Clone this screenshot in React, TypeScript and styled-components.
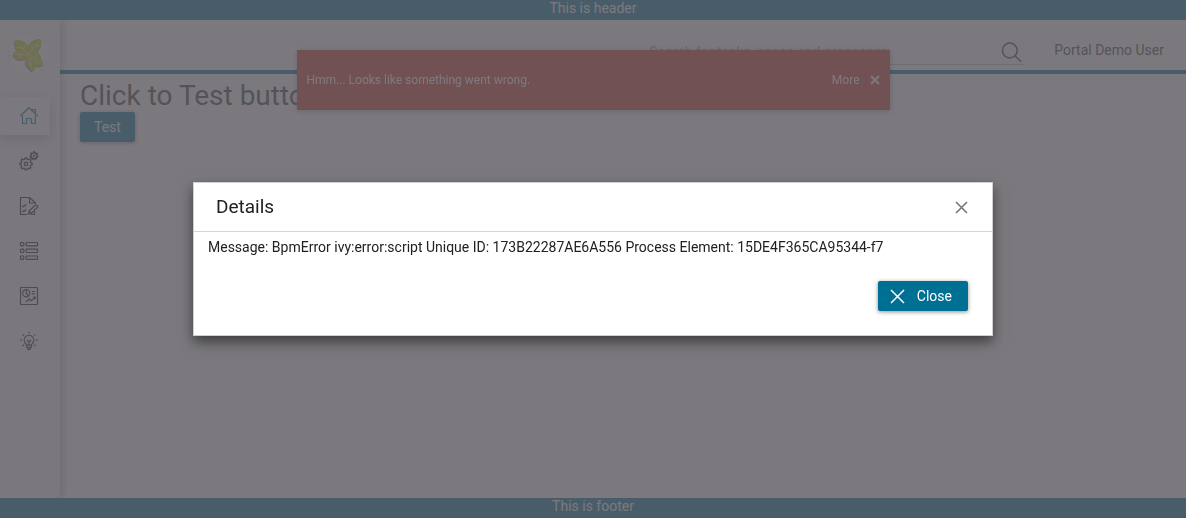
import React from "react";
import styled, { createGlobalStyle, css } from "styled-components";

const GlobalStyle = createGlobalStyle`
  *, *::before, *::after { box-sizing: border-box; }
  body {
    margin: 0;
    background: #fff;
    color: #424242;
    font-family: Roboto, "Liberation Sans", sans-serif;
    font-size: 14px;
    line-height: 16px;
  }
  button, input { font: inherit; }
`;

const Page = styled.div`
  display: flex;
  flex-direction: column;
  min-height: 100vh;
`;

const Banner = styled.div`
  height: 20px;
  background: #006f94;
  color: #fff;
  text-align: center;
`;

const Shell = styled.div`
  display: flex;
  flex: 1;
`;

const Sidebar = styled.aside`
  width: 60px;
  background: #fafafa;
  box-shadow: 2px 0 8px rgba(0, 0, 0, 0.3);
  clip-path: inset(0 -12px 0 0);
  z-index: 1;
`;

const LogoLink = styled.a`
  display: flex;
  justify-content: center;
  padding: 12px 2px 0 0;
  height: 74px;
`;

const Menu = styled.nav`
  display: flex;
  flex-direction: column;
  gap: 7px;
  padding-top: 3px;
`;

const MenuItem = styled.a<{ $active?: boolean }>`
  display: flex;
  align-items: center;
  width: 50px;
  height: 38px;
  padding-left: 19px;
  color: #212121;
  ${(p) =>
    p.$active &&
    css`
      background: #fff;
      color: #006f94;
      box-shadow: 0 4px 12px rgba(0, 0, 0, 0.25);
    `}
`;

const Main = styled.div`
  flex: 1;
  min-width: 0;
`;

const TopBar = styled.header`
  display: flex;
  justify-content: flex-end;
  height: 54px;
  padding-right: 22px;
  border-bottom: 4px solid #006f94;
`;

const SearchBox = styled.label`
  display: flex;
  align-items: center;
  width: 376px;
  height: 25px;
  margin: 20px 29px 0 0;
  padding-right: 2px;
  border-bottom: 1px solid #bdbdbd;
`;

const SearchInput = styled.input`
  flex: 1;
  height: 20px;
  padding: 0;
  border: 0;
  background: transparent;
  outline: none;
  &::placeholder { color: #9e9e9e; opacity: 1; }
`;

const UserLink = styled.a`
  margin-top: 22px;
  color: #424242;
  text-decoration: none;
`;

const Content = styled.main`
  padding: 6px 20px;
`;

const Title = styled.h1`
  margin: 0;
  font-size: 28px;
  font-weight: 400;
  line-height: 32px;
`;

const Button = styled.button<{ $icon?: boolean }>`
  display: flex;
  align-items: center;
  gap: 12px;
  height: 30px;
  padding: ${(p) => (p.$icon ? "0 16px 0 12px" : "0 14px")};
  border: 0;
  border-radius: 2px;
  background: #006f94;
  color: #fff;
  box-shadow: 0 1px 4px rgba(0, 0, 0, 0.45);
`;

const Growl = styled.div`
  position: fixed;
  z-index: 2;
  top: 50px;
  left: 25%;
  width: 50%;
  height: 60px;
  display: flex;
  align-items: center;
  gap: 10px;
  padding: 0 10px;
  background: #cf382f;
  color: #fff;
  font-size: 12px;
  box-shadow: 0 1px 6px rgba(0, 0, 0, 0.4);
`;

const GrowlText = styled.span`
  flex: 1;
`;

const GrowlLink = styled.a`
  color: inherit;
  text-decoration: none;
`;

const IconButton = styled.button`
  display: flex;
  padding: 0;
  border: 0;
  background: none;
  color: inherit;
`;

const Overlay = styled.div`
  position: fixed;
  z-index: 3;
  inset: 0;
  display: flex;
  align-items: center;
  justify-content: center;
  background: rgba(90, 88, 94, 0.8);
`;

const Dialog = styled.section`
  width: 100%;
  max-width: 800px;
  border: 1px solid #d0d0d0;
  background: #fff;
  color: #212121;
  box-shadow: 0 6px 12px rgba(0, 0, 0, 0.5);
`;

const DialogHead = styled.div`
  display: flex;
  align-items: center;
  justify-content: space-between;
  height: 49px;
  padding: 0 24px 0 22px;
  border-bottom: 1px solid #d6d6d6;
  color: #757575;
`;

const DialogTitle = styled.h2`
  margin: 0;
  color: #212121;
  font-size: 19px;
  font-weight: 400;
  line-height: 24px;
`;

const DialogBody = styled.div`
  padding: 7px 24px 24px 14px;
`;

const Message = styled.p`
  margin: 0 0 26px;
`;

const Actions = styled.div`
  display: flex;
  justify-content: flex-end;
`;

const Icon = ({ children, size = 20, stroke = 1.2 }: { children: React.ReactNode; size?: number; stroke?: number }) => (
  <svg width={size} height={size} viewBox={`0 0 ${size} ${size}`} fill="none" stroke="currentColor" strokeWidth={stroke} strokeLinejoin="round" aria-hidden="true">
    {children}
  </svg>
);

const Cross = ({ size, stroke }: { size: number; stroke: number }) => (
  <Icon size={size} stroke={stroke}>
    <path d={`M1 1L${size - 1} ${size - 1}M${size - 1} 1L1 ${size - 1}`} />
  </Icon>
);

const gear = (cx: number, cy: number, outer: number, inner: number, teeth: number) => {
  const points: string[] = [];
  for (let i = 0; i < teeth; i++) {
    [[-0.3, inner], [-0.2, outer], [0.2, outer], [0.3, inner]].forEach(([offset, r]) => {
      const a = ((i + offset) / teeth) * Math.PI * 2;
      points.push(`${(cx + r * Math.sin(a)).toFixed(2)} ${(cy - r * Math.cos(a)).toFixed(2)}`);
    });
  }
  return `M${points.join("L")}Z`;
};

const HomeIcon = () => (
  <Icon>
    <path d="M1.3 10L10 1.8L18.7 10M3.5 9.5V17.5H7.5V12.5H12.3V17.5H16.3V9.5M12.8 3.5H16.3V7.5" />
  </Icon>
);

const GearsIcon = () => (
  <Icon>
    <path d={gear(7, 12.9, 6.2, 4.8, 8)} />
    <circle cx="7" cy="12.9" r="1.7" />
    <path d={gear(15, 4.8, 3.9, 2.7, 7)} />
    <circle cx="15" cy="4.8" r="0.5" />
  </Icon>
);

const TaskIcon = () => (
  <Icon>
    <path d="M16.4 8V7L10.5 1.5H1.5V18.5H8M10.5 1.5V7H16.4M3.3 9.5L4.6 10.8L7.3 8.2M3.3 14.5L4.6 15.8L7.3 13.2M9.2 18.3L10.2 15L16.2 9.3Q17.3 8.6 18.3 9.6Q19.1 10.7 18.2 11.6L12.4 17.3ZM10.2 15L12.4 17.3M12 18.5H15.5V15.5" />
  </Icon>
);

const ListIcon = () => (
  <Icon>
    {[1.5, 8.2, 15].map((y) => (
      <React.Fragment key={y}>
        <rect x="1.5" y={y} width="3.3" height="3.3" rx="0.5" />
        <rect x="7.2" y={y} width="11.3" height="3.3" rx="0.5" />
      </React.Fragment>
    ))}
  </Icon>
);

const ChartIcon = () => (
  <Icon>
    <rect x="1.5" y="1.5" width="17" height="17" rx="0.5" />
    <circle cx="7.2" cy="7.2" r="3.6" />
    <path d="M7.2 3.6V7.2L9.5 10M13 5.5H16M13 7.8H16M7 16L10.2 13L12.2 14.7L16.2 11.2M14.2 11.2H16.2V13" />
  </Icon>
);

const BulbIcon = () => (
  <Icon>
    <path d="M7.5 14.2Q7.5 13.3 6.4 12.3A4.8 4.8 0 1 1 13.6 12.3Q12.5 13.3 12.5 14.2ZM7.8 14.5V16.5H12.2V14.5M9 16.5V18.5H11V16.5M10 14V10M8 9L10 10.8L12 9" />
    <path d="M10 .8V2.6M3.7 3.3L5 4.6M16.3 3.3L15 4.6M1.2 9.2H3M17 9.2H18.8M3.7 15L5 13.8M16.3 15L15 13.8" />
  </Icon>
);

const SearchIcon = () => (
  <Icon size={22} stroke={1.5}>
    <circle cx="8.8" cy="9.5" r="7.4" />
    <path d="M14 14.8L20.2 20.8" />
  </Icon>
);

const leaves = [
  "M20.300 20Q19.800 12 25 9Q29 6.500 34 7Q35 13 32.500 17.500Q29.500 21.500 22 23Z",
  "M21.500 22Q12 20.500 9 17Q6.500 13 7.700 8.500Q13 7 17 9.500Q20.500 12 21.500 17Z",
  "M22 21.500Q14 17 8.500 18.500Q7.500 21 5.700 23Q9 28 14 28Q19 27.500 22.500 23.500Z",
  "M21 22Q27 17.500 32 21Q33.500 23.500 34 27Q36 30 36.300 33.500Q32 35.300 27.500 33.500Q22.500 30 21 22Z",
  "M22 23Q17.500 27 18.500 32Q20.500 36.500 25.300 39.500Q28 37 28.700 33Q28 26 22 23Z",
];

const Logo = () => (
  <svg width="44" height="44" viewBox="0 0 44 44" aria-hidden="true">
    <circle cx="22" cy="22" r="20.5" fill="#fff" stroke="#d8d8d8" strokeDasharray="3 2" strokeWidth=".7" />
    <g fill="#999" transform="translate(-.5 .9)">
      {leaves.map((d) => <path key={d} d={d} />)}
    </g>
    <g fill="#c4cc1e">
      {leaves.map((d) => <path key={d} d={d} />)}
    </g>
    <path
      d="M32 9L22 22L10 11M8 22.500L22 22L34 32M22 22L25 37M25 17.500V12M28 14H32M17 17.500V12M15 15.500H10M14 22.200L11 20M15 22.500L12 26M27 26L30 23M30 28.500L28 32M23.200 29L26 27M24 33L21 30"
      fill="none"
      stroke="#f4f6c8"
      strokeWidth=".7"
    />
  </svg>
);

const menu = [
  { label: "Dashboard", icon: <HomeIcon />, active: true },
  { label: "Processes", icon: <GearsIcon /> },
  { label: "Tasks", icon: <TaskIcon /> },
  { label: "Cases", icon: <ListIcon /> },
  { label: "Statistics", icon: <ChartIcon /> },
  { label: "Ideas", icon: <BulbIcon /> },
];

export default function App() {
  return (
    <>
      <GlobalStyle />
      <Page>
        <Banner>This is header</Banner>
        <Shell>
          <Sidebar>
            <LogoLink href="#" aria-label="Portal home">
              <Logo />
            </LogoLink>
            <Menu>
              {menu.map((item) => (
                <MenuItem key={item.label} href="#" aria-label={item.label} $active={item.active}>
                  {item.icon}
                </MenuItem>
              ))}
            </Menu>
          </Sidebar>
          <Main>
            <TopBar>
              <SearchBox>
                <SearchInput type="text" aria-label="Search" placeholder="Search for tasks, cases and processes" />
                <SearchIcon />
              </SearchBox>
              <UserLink href="#">Portal Demo User</UserLink>
            </TopBar>
            <Content>
              <Title>Click to Test button</Title>
              <Button type="button">Test</Button>
            </Content>
          </Main>
        </Shell>
        <Banner>This is footer</Banner>
      </Page>
      <Growl role="alert">
        <GrowlText>Hmm... Looks like something went wrong.</GrowlText>
        <GrowlLink href="#">More</GrowlLink>
        <IconButton type="button" aria-label="Dismiss">
          <Cross size={10} stroke={2} />
        </IconButton>
      </Growl>
      <Overlay>
        <Dialog role="dialog" aria-labelledby="dialog-title">
          <DialogHead>
            <DialogTitle id="dialog-title">Details</DialogTitle>
            <IconButton type="button" aria-label="Close dialog">
              <Cross size={13} stroke={1.6} />
            </IconButton>
          </DialogHead>
          <DialogBody>
            <Message>Message: BpmError ivy:error:script Unique ID: 173B22287AE6A556 Process Element: 15DE4F365CA95344-f7</Message>
            <Actions>
              <Button type="button" $icon>
                <Cross size={15} stroke={1.5} />
                Close
              </Button>
            </Actions>
          </DialogBody>
        </Dialog>
      </Overlay>
    </>
  );
}
